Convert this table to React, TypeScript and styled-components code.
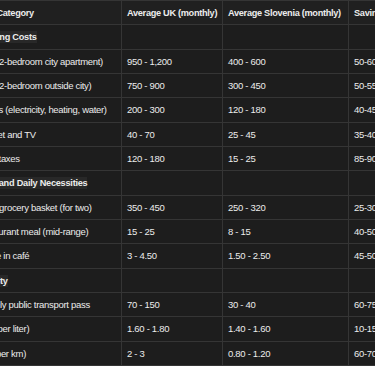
import React from "react";
import styled, { createGlobalStyle } from "styled-components";

type Row =
  | { kind: "section"; label: string }
  | { kind: "item"; label: string; uk: string; si: string; save: string };

const rows: Row[] = [
  { kind: "section", label: "Housing Costs" },
  { kind: "item", label: "Rent (2-bedroom city apartment)", uk: "950 - 1,200", si: "400 - 600", save: "50-60%" },
  { kind: "item", label: "Rent (2-bedroom outside city)", uk: "750 - 900", si: "300 - 450", save: "50-55%" },
  { kind: "item", label: "Utilities (electricity, heating, water)", uk: "200 - 300", si: "120 - 180", save: "40-45%" },
  { kind: "item", label: "Internet and TV", uk: "40 - 70", si: "25 - 45", save: "35-40%" },
  { kind: "item", label: "Local taxes", uk: "120 - 180", si: "15 - 25", save: "85-90%" },
  { kind: "section", label: "Food and Daily Necessities" },
  { kind: "item", label: "Basic grocery basket (for two)", uk: "350 - 450", si: "250 - 320", save: "25-30%" },
  { kind: "item", label: "Restaurant meal (mid-range)", uk: "15 - 25", si: "8 - 15", save: "40-50%" },
  { kind: "item", label: "Coffee in café", uk: "3 - 4.50", si: "1.50 - 2.50", save: "45-50%" },
  { kind: "section", label: "Mobility" },
  { kind: "item", label: "Monthly public transport pass", uk: "70 - 150", si: "30 - 40", save: "60-75%" },
  { kind: "item", label: "Fuel (per liter)", uk: "1.60 - 1.80", si: "1.40 - 1.60", save: "10-15%" },
  { kind: "item", label: "Taxi (per km)", uk: "2 - 3", si: "0.80 - 1.20", save: "60-70%" },
];

const GlobalStyle = createGlobalStyle`
  html, body {
    margin: 0;
    padding: 0;
    background: #1d1d1d;
  }
`;

const Viewport = styled.div`
  width: 375px;
  height: 366px;
  overflow: hidden;
  background: #1d1d1d;
  font-family: "Liberation Sans", Arial, sans-serif;
  color: #ececec;
`;

const Table = styled.table`
  margin-left: -31px;
  border-collapse: collapse;
  table-layout: fixed;
  width: 452px;
  font-size: 9.5px;
  letter-spacing: -0.3px;
`;

const Tr = styled.tr`
  height: 24.33px;
`;

const Th = styled.th`
  text-align: left;
  font-weight: 700;
  font-size: 9.2px;
  letter-spacing: -0.3px;
  padding: 0 5px;
  border: 1px solid #353535;
  background: #202020;
  white-space: nowrap;
  overflow: hidden;
`;

const Td = styled.td`
  padding: 0 5px;
  border: 1px solid #353535;
  white-space: nowrap;
  overflow: hidden;
`;

const Section = styled.strong`
  font-weight: 700;
  font-size: 9.2px;
  letter-spacing: -0.25px;
  background: rgba(255, 255, 255, 0.05);
  padding: 1px 0;
`;

export default function App() {
  return (
    <Viewport>
      <GlobalStyle />
      <Table>
        <colgroup>
          <col style={{ width: 152 }} />
          <col style={{ width: 101 }} />
          <col style={{ width: 126 }} />
          <col style={{ width: 73 }} />
        </colgroup>
        <thead>
          <Tr>
            <Th>Cost Category</Th>
            <Th>Average UK (monthly)</Th>
            <Th>Average Slovenia (monthly)</Th>
            <Th>Savings (%)</Th>
          </Tr>
        </thead>
        <tbody>
          {rows.map((r, i) =>
            r.kind === "section" ? (
              <Tr key={i}>
                <Td>
                  <Section>{r.label}</Section>
                </Td>
                <Td />
                <Td />
                <Td />
              </Tr>
            ) : (
              <Tr key={i}>
                <Td>{r.label}</Td>
                <Td>{r.uk}</Td>
                <Td>{r.si}</Td>
                <Td>{r.save}</Td>
              </Tr>
            )
          )}
        </tbody>
      </Table>
    </Viewport>
  );
}
